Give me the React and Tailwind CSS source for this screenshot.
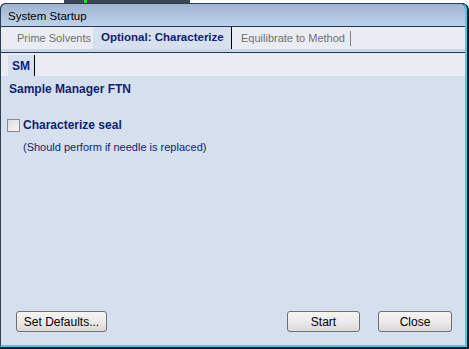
import React from 'react';

const font = { fontFamily: 'Tahoma, "Liberation Sans", "DejaVu Sans", sans-serif' };

const Button = ({ children, className }) => (
  <button
    className={`h-[21px] rounded-[3px] border border-[#707070] bg-gradient-to-b from-[#f4f4f4] via-[#ebebeb] to-[#d9d9d9] text-[12px] text-black leading-none ${className}`}
  >
    {children}
  </button>
);

const App = () => {
  return (
    <div className="relative w-[469px] h-[349px] bg-white overflow-hidden" style={font}>
      {/* window behind */}
      <div className="absolute left-[64px] top-0 w-[126px] h-[4px] bg-[#3b4654]">
        <div className="absolute left-[20px] top-0 w-[3px] h-[3px] bg-[#22e022]" />
      </div>

      <div className="absolute left-0 top-[3px] w-[469px] h-[346px] bg-[#0c1a26] rounded-tl-[6px] rounded-tr-[7px] pr-[2px] pb-[2px]">
        <div className="flex flex-col h-full rounded-tl-[6px] rounded-tr-[6px] border-l border-t border-[#2c3e52] border-r-[2px] border-r-[#3ccdf0] border-b-[2px] border-b-[#3ccdf0] overflow-hidden">
          {/* title bar */}
          <div className="h-[23px] shrink-0 flex items-center pl-[7px] pt-[3px] bg-gradient-to-b from-[#a0b4d0] to-[#bfd2ea] border-b border-[#1e3a58] text-[11.5px] text-black">
            System Startup
          </div>

          {/* tabs */}
          <div className="h-[25px] shrink-0 flex items-stretch bg-[#e9edf3] border-b-[3px] border-b-[#c9d6e8]">
            <div className="w-[92px] flex items-center pl-[16px] text-[11px] text-[#707070]">Prime Solvents</div>
            <div className="w-[139px] flex items-center pl-[8px] bg-[#d6e0ee] text-[11.5px] font-bold text-[#0e1f74] border-r border-black">
              Optional: Characterize
            </div>
            <div className="flex items-center pl-[9px] text-[11px] text-[#707070]">
              Equilibrate to Method
              <span className="ml-[5px] w-px h-[15px] bg-[#808080]" />
            </div>
          </div>
          <div className="h-px shrink-0 bg-[#1e3a58]" />

          {/* sub tabs */}
          <div className="h-[23px] shrink-0 flex items-stretch bg-[#e9edf3] pt-[2px]">
            <div className="ml-[7px] flex items-center px-[4px] bg-[#d6e0ee] text-[12px] font-bold text-[#0e1f74] border-r border-black">
              SM
            </div>
          </div>

          {/* content */}
          <div className="flex-1 flex flex-col bg-[#d5dfed] px-[8px] pt-[6px] pb-[13px] text-[#0e1f74]">
            <div className="text-[12px] font-bold leading-[15px]">Sample Manager FTN</div>
            <div className="mt-[21px] flex items-center gap-[3px]">
              <span className="w-[13px] h-[13px] -ml-[2px] border border-[#8a8a8a] bg-gradient-to-br from-[#dcdcdc] to-[#f6f6f6]" />
              <span className="text-[12px] font-bold leading-[15px]">Characterize seal</span>
            </div>
            <div className="mt-[7px] pl-[14px] text-[11px] leading-[14px]">(Should perform if needle is replaced)</div>

            <div className="mt-auto flex items-center">
              <Button className="ml-[7px] w-[91px]">Set Defaults...</Button>
              <Button className="ml-auto w-[73px]">Start</Button>
              <Button className="ml-[18px] mr-[5px] w-[74px]">Close</Button>
            </div>
          </div>
        </div>
      </div>
    </div>
  );
};

export default App;
